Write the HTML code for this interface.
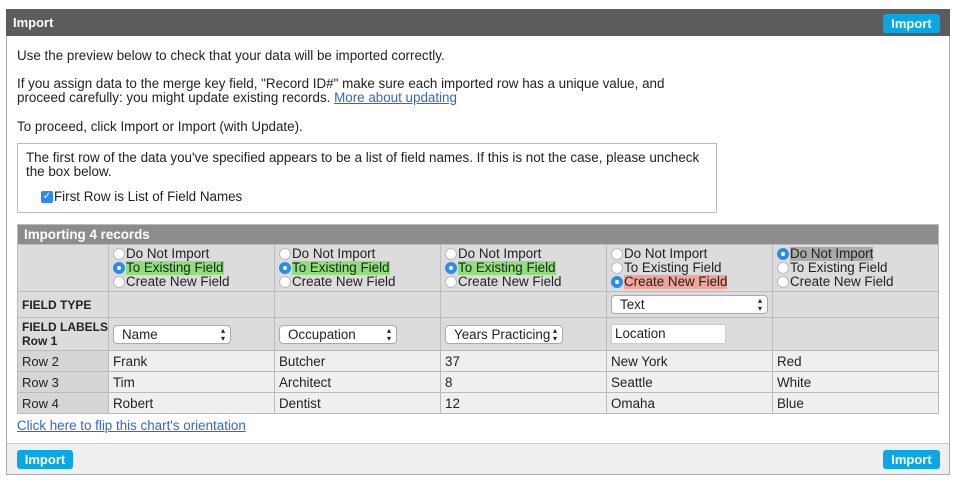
<!DOCTYPE html>
<html><head><style>
*{box-sizing:border-box;margin:0;padding:0}
body{width:957px;height:482px;background:#fff;font-family:"Liberation Sans",sans-serif;font-size:13.4px;color:#222;position:relative;overflow:hidden}
.a{position:absolute}
.panel{left:6px;top:9px;width:944px;height:466px;border:1px solid #aaa;background:#fff}
.hdr{left:6px;top:9px;width:944px;height:27px;background:#5c5c5c;color:#fff;font-weight:bold;font-size:13px;padding:6px 0 0 7px}
.btn{background:#0aa6e6;color:#fff;font-weight:bold;font-size:13px;border-radius:3px;text-align:center;line-height:19px;height:19px}
.foot{left:7px;top:443px;width:942px;height:31px;background:#efefef;border-top:1px solid #ccc}
a{color:#3366cc;text-decoration:underline}
.box{left:17px;top:143px;width:700px;height:70px;border:1px solid #bbb;padding:7px 8px;line-height:14px}
table{position:absolute;left:17px;top:224px;border-collapse:collapse;border:1px solid #888;width:922px;table-layout:fixed}
td{border:1px solid #bbb;background:#dcdcdc;padding:0 4px;vertical-align:middle;line-height:14px;overflow:hidden;white-space:nowrap}
td.h{font-weight:bold;font-size:12px;padding-left:4px}
tr.d td{background:#efefef;height:21px;line-height:19px}
tr.d td.h{background:#d6d6d6;font-weight:normal;font-size:13px}
.cap{background:#8c8c8c;color:#fff;font-weight:bold;height:20px;padding-left:6px}
.r{display:flex;align-items:center;height:14px;white-space:nowrap}
.rb{width:12px;height:12px;border-radius:50%;background:#fff;border:1px solid #bbb;display:inline-block;margin-right:1px;flex:none}
.on{background:#2a8cf0;border-color:#2a8cf0;position:relative}
.on:after{content:"";position:absolute;left:3px;top:3px;width:4px;height:4px;border-radius:50%;background:#fff}
.g{background:#8fe07a}.p{background:#f0a598}.gr{background:#aaa}
.sel{display:inline-block;border:1px solid #aaa;border-radius:4px;background:#fff;height:19px;line-height:17px;padding:0 8px;position:relative;vertical-align:middle}
.sel:after{content:"▴\A▾";white-space:pre;position:absolute;right:5px;top:1px;font-size:8px;line-height:8px}
</style></head><body>
<div class="a panel"></div>
<div class="a hdr">Import</div>
<div class="a btn" style="left:883px;top:14px;width:57px">Import</div>
<div class="a" style="left:17px;top:48px">Use the preview below to check that your data will be imported correctly.</div>
<div class="a" style="left:17px;top:77px;line-height:14px">If you assign data to the merge key field, "Record ID#" make sure each imported row has a unique value, and<br>proceed carefully: you might update existing records. <a>More about updating</a></div>
<div class="a" style="left:17px;top:119px">To proceed, click Import or Import (with Update).</div>
<div class="a box">The first row of the data you've specified appears to be a list of field names. If this is not the case, please uncheck the box below.
<div style="margin:11px 0 0 15px;display:flex;align-items:center"><span style="width:12px;height:12px;background:#2a8cf0;border-radius:2px;color:#fff;font-size:10px;line-height:12px;text-align:center;margin-right:1px">✓</span>First Row is List of Field Names</div></div>
<table>
<colgroup><col style="width:91px"><col style="width:166px"><col style="width:166px"><col style="width:166px"><col style="width:166px"><col></colgroup>
<tr style="height:20px"><td colspan="6" class="cap">Importing 4 records</td></tr>
<tr style="height:47px"><td></td>
<td><div class="r"><span class="rb"></span>Do Not Import</div><div class="r"><span class="rb on"></span><span class="g">To Existing Field</span></div><div class="r"><span class="rb"></span>Create New Field</div></td>
<td><div class="r"><span class="rb"></span>Do Not Import</div><div class="r"><span class="rb on"></span><span class="g">To Existing Field</span></div><div class="r"><span class="rb"></span>Create New Field</div></td>
<td><div class="r"><span class="rb"></span>Do Not Import</div><div class="r"><span class="rb on"></span><span class="g">To Existing Field</span></div><div class="r"><span class="rb"></span>Create New Field</div></td>
<td><div class="r"><span class="rb"></span>Do Not Import</div><div class="r"><span class="rb"></span>To Existing Field</div><div class="r"><span class="rb on"></span><span class="p">Create New Field</span></div></td>
<td><div class="r"><span class="rb on"></span><span class="gr">Do Not Import</span></div><div class="r"><span class="rb"></span>To Existing Field</div><div class="r"><span class="rb"></span>Create New Field</div></td></tr>
<tr style="height:26px"><td class="h">FIELD TYPE</td><td></td><td></td><td></td><td><span class="sel" style="width:157px">Text</span></td><td></td></tr>
<tr style="height:33px"><td class="h">FIELD LABELS<br>Row 1</td><td><span class="sel" style="width:118px">Name</span></td><td><span class="sel" style="width:118px">Occupation</span></td><td><span class="sel" style="width:118px">Years Practicing</span></td><td><span style="display:inline-block;width:115px;height:20px;background:#fff;border:1px solid #ccc;padding-left:3px;line-height:18px;vertical-align:middle">Location</span></td><td></td></tr>
<tr class="d"><td class="h">Row 2</td><td>Frank</td><td>Butcher</td><td>37</td><td>New York</td><td>Red</td></tr>
<tr class="d"><td class="h">Row 3</td><td>Tim</td><td>Architect</td><td>8</td><td>Seattle</td><td>White</td></tr>
<tr class="d"><td class="h">Row 4</td><td>Robert</td><td>Dentist</td><td>12</td><td>Omaha</td><td>Blue</td></tr>
</table>
<div class="a" style="left:17px;top:418px"><a>Click here to flip this chart's orientation</a></div>
<div class="a foot"></div>
<div class="a btn" style="left:17px;top:450px;width:56px">Import</div>
<div class="a btn" style="left:883px;top:450px;width:57px">Import</div>
</body></html>
